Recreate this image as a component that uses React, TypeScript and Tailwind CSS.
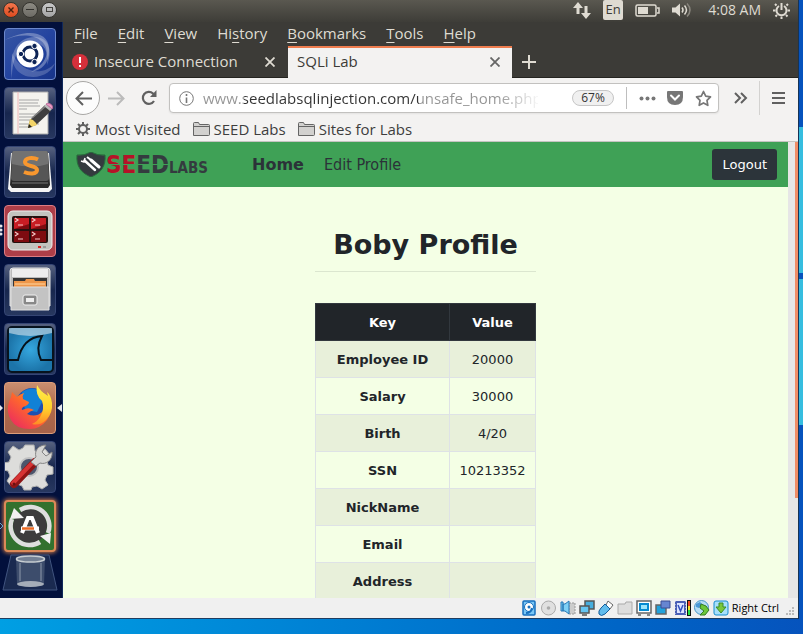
import React from "react";
import type { ReactNode } from "react";

const UI_FONT = "font-['Open_Sans',sans-serif]";
const PAGE_FONT = "font-['DejaVu_Sans',sans-serif]";

const menus = ["File", "Edit", "View", "History", "Bookmarks", "Tools", "Help"];
const accessIndex: Record<string, number> = { History: 2 };

const rows = [
  ["Employee ID", "20000"],
  ["Salary", "30000"],
  ["Birth", "4/20"],
  ["SSN", "10213352"],
  ["NickName", ""],
  ["Email", ""],
  ["Address", ""],
];

function TitleBar() {
  return (
    <header className="flex h-[22px] shrink-0 items-center bg-linear-to-b from-[#5a5850] to-[#3e3d38] pl-[3px] pr-2 text-[#dfdbd2]">
      <div className="-mt-[3px] flex gap-[3px]">
        <button aria-label="Close window" className="flex size-4 items-center justify-center rounded-full border border-[#35342f] bg-linear-to-b from-[#f4764c] to-[#dd4a1d]">
          <svg width="6" height="6" viewBox="0 0 6 6" stroke="#49210f" strokeWidth="1.4"><path d="M.5.5l5 5M5.500.500l-5 5" /></svg>
        </button>
        <button aria-label="Minimize window" className="flex size-4 items-center justify-center rounded-full border border-[#35342f] bg-linear-to-b from-[#8d8b83] to-[#6d6b65]">
          <span className="h-px w-2 bg-[#33322e]" />
        </button>
        <button aria-label="Restore window" className="flex size-4 items-center justify-center rounded-full border border-[#35342f] bg-linear-to-b from-[#c9c9c9] to-[#a3a3a3]">
          <span className="h-[5px] w-[7px] border border-[#44433f]" />
        </button>
      </div>
      <div className="-mt-[2px] ml-auto flex items-center">
        <svg width="18" height="18" viewBox="0 0 18 18" fill="#dfdbd2"><path d="M0 7l5-6 5 6H6.500v6h-3V7zM8 12l5 6 5-6h-3.500V5h-3v7z" /></svg>
        <span className="ml-3 flex h-5 w-5 items-center justify-center rounded-[2px] bg-[#dfdbd2] text-[13px] text-[#3c3b37]">En</span>
        <svg className="ml-3" width="25" height="13" viewBox="0 0 25 13" fill="none" stroke="#dfdbd2" strokeWidth="1.5"><rect x="1" y="1" width="20" height="11" rx="1.500" /><path d="M3 3h10v7H3z" fill="#dfdbd2" stroke="none" /><path d="M22 4h2v5h-2" /></svg>
        <svg className="ml-3" width="20" height="16" viewBox="0 0 20 16" fill="none" stroke="#dfdbd2" strokeWidth="1.500"><path d="M0 5.500h3.500L8 1.500v13l-4.500-4H0z" fill="#dfdbd2" stroke="none" /><path d="M10 5.500q2 2.500 0 5M12.500 3.500q4 4.500 0 9" /><path d="M15 1.500q6 6.500 0 13" stroke="#88857d" /></svg>
        <span className="ml-4 text-[14px] leading-5">4:08 AM</span>
        <svg className="ml-3" width="17" height="17" viewBox="0 0 17 17" fill="none" stroke="#dfdbd2" strokeWidth="2"><path d="M6 4a5 5 0 1 0 5 0M8.500 1v7" /><path d="M3.500 3.500L2 2M13.500 3.500L15 2M2.500 8.500H0M14.500 8.500H17M4 13l-1.500 1.500M13 13l1.500 1.500M8.500 14.500V17" /></svg>
      </div>
    </header>
  );
}

function Tile({ label, tone, children }: { label: string; tone: string; children: ReactNode }) {
  return (
    <button aria-label={label} className={`size-[52px] shrink-0 overflow-hidden rounded-[4px] border ${tone}`}>
      <svg className="block" width="50" height="50" viewBox="1 1 50 50">{children}</svg>
    </button>
  );
}

const DARK_TILE = "border-[#354574] bg-linear-to-b from-[#56617f] via-[#17264e] to-[#27375f]";

function Launcher() {
  return (
    <nav aria-label="Launcher" className="relative flex w-[63px] shrink-0 flex-col items-start gap-[7px] overflow-hidden border-r border-[#10295b] bg-[#02103c] pl-1 pt-[6px]">
      <Tile label="Search" tone="border-[#6c88cc] bg-linear-to-br from-[#3856a3] via-[#2444a0] to-[#17348a]">
        <g fill="#fff">
          <path d="M8 51C4 24 14 9 31 9c14 0 18 14 12 28 2-14-3-22-14-22C16 15 8 28 8 51z" fillOpacity=".25" />
          <path d="M1 12C24 0 44 4 45 20c1 15-7 22-18 24C60 26 36-4 1 12z" fillOpacity=".3" />
          <path d="M8 25c-1 13 7 24 21 24 11 0 20-7 22-14-12 14-34 10-43-10z" fillOpacity=".2" />
        </g>
        <circle cx="26" cy="26" r="13.500" fill="#fff" />
        <circle cx="26" cy="26" r="7" fill="none" stroke="#0d2355" strokeWidth="3" />
        <g fill="#0d2355" stroke="#fff" strokeWidth="1"><circle cx="17" cy="26" r="2.700" /><circle cx="30.500" cy="18" r="2.700" /><circle cx="30.500" cy="34" r="2.700" /></g>
      </Tile>
      <Tile label="Text editor" tone={DARK_TILE}>
        <path d="M9 5h35v42H9z" fill="#f4f3ee" stroke="#aaa" />
        <path d="M14 5v42" stroke="#f0b8b8" />
        <path d="M15 13h20M15 16h19M15 19h21M15 22h8M15 27h18M15 30h19M15 33h12M15 37h20M15 40h10" stroke="#a5a5a5" />
        <path d="M24 41l2-8L41 18l6 6-15 14z" fill="#3f3f3f" />
        <path d="M28 31L43 18" stroke="#858585" strokeWidth="1.500" />
        <path d="M24 41l2-9 3 1 3 3 1 2z" fill="#f3d568" /><path d="M24 41l1-4 3 3z" fill="#222" />
        <path d="M40 19l2-2 6 5-2 2z" fill="#bbb" /><path d="M42 17c4-2 8 2 6 5z" fill="#eb9bc4" stroke="#bf6f9d" />
      </Tile>
      <Tile label="Sublime Text" tone={DARK_TILE}>
        <path d="M7 7h38l3 36-3 3H7l-3-3z" fill="#f4f4f4" />
        <path d="M8 6h36l2 33-2 3H8l-2-3z" fill="#292929" /><path d="M10 5h32q2 0 2 3l1 24q0 3-3 3H10q-3 0-3-3L8 8q0-3 2-3z" fill="#565656" />
        <path d="M8 8q0-3 2-3h32q2 0 2 3v10Q28 23 8 18z" fill="#8a8a8a" opacity=".55" /><path d="M8 37h36" stroke="#777" />
        <path d="M34 13.500c-5-2.500-13-2-13 2.500 0 5 12 3 12 8 0 4.500-8 4-13 2" fill="none" stroke="#f8972e" strokeWidth="4" />
      </Tile>
      <Tile label="Terminator" tone="border-[#dc7c83] bg-[#ad3e48]">
        <rect x="4" y="6" width="44" height="39" rx="5" fill="#c3c3bf" stroke="#eee" /><rect x="8" y="11" width="36" height="27" rx="2" fill="#25100f" />
        <path d="M10 13h15v11H10zM27 13h15v11H27zM10 26h15v11H10zM27 26h15v11H27z" fill="#7d0b10" />
        <path d="M10 13h15v6L10 24zM27 13h15v6l-15 5z" fill="#c81d24" />
        <path d="M11 13l3 2-3 2m3 3h5M28 13l3 2-3 2m3 3h5M11 27l3 2-3 2m3 3h5M28 27l3 2-3 2m3 3h5" fill="none" stroke="#f3c7c7" strokeWidth="1.200" />
        <path d="M34 42h3" stroke="#d22" strokeWidth="2" /><path d="M39 42h3" stroke="#999" strokeWidth="2" />
      </Tile>
      <Tile label="Files" tone={DARK_TILE}>
        <path d="M6 7q0-3 3-3h34q3 0 3 3v35H6z" fill="#bcbcbc" stroke="#e8e8e8" /><path d="M8 5h36v8H8z" fill="#eee" /><path d="M9 14h34v9H9z" fill="#363636" />
        <path d="M10 17h11l1-2h8l1 2h11v8H10z" fill="#ed9649" /><path d="M11 20h30" stroke="#ffd7a3" />
        <path d="M7 23h38v23H7z" fill="#c3c3c3" stroke="#dfdfdf" /><rect x="19" y="31" width="14" height="10" rx="2" fill="#888" stroke="#eee" /><rect x="22" y="34" width="8" height="4" fill="#eee" />
      </Tile>
      <Tile label="Wireshark" tone={DARK_TILE}>
        <defs><radialGradient id="ws"><stop stopColor="#35a7df" /><stop offset="1" stopColor="#1c74a9" /></radialGradient></defs>
        <rect x="4" y="4" width="45" height="45" rx="4" fill="url(#ws)" stroke="#07131e" strokeWidth="2" /><path d="M5 5h43v5Q26 16 5 10z" fill="#d5e5ee" opacity=".6" />
        <path d="M4 37h10c3-14 11-23 24-24-5 9-4 18-1 24h11" fill="none" stroke="#06121b" strokeWidth="2" />
      </Tile>
      <Tile label="Firefox" tone="border-[#dc9c79] bg-linear-to-b from-[#c98e70] via-[#b0694a] to-[#a5624a]">
        <defs>
          <linearGradient id="fx" x1="1" y1="0" x2="0" y2="1"><stop stopColor="#ffb52a" /><stop offset=".45" stopColor="#ff6a2a" /><stop offset="1" stopColor="#e81f6a" /></linearGradient>
          <linearGradient id="fl" x1="0" y1="0" x2="0" y2="1"><stop stopColor="#fff04a" /><stop offset=".6" stopColor="#ffd02c" /><stop offset="1" stopColor="#ff8a26" /></linearGradient>
        </defs>
        <circle cx="28" cy="22" r="16" fill="#1e4fb0" /><path d="M18 10q8-6 16-2l4 12-5 10-12-2z" fill="#1181d6" />
        <path d="M7 15l1-5 5 5q3-3 7-4-2 3-1 6l6 3q0 3-6 5-2 2-1 3l3-1q4-2 9 1-4 1-7 4 9 4 15-2l9-8q1 8-4 16-7 9-17 9Q12 47 7 38 3 31 4 24q1-5 3-9z" fill="url(#fx)" />
        <path d="M33 3q-2 10 5 16 3 8-2 16-3 5-8 7 8 2 14-4 7-7 6-17-1-8-5-11l1 4Q36 9 33 3z" fill="url(#fl)" />
      </Tile>
      <Tile label="System settings" tone={DARK_TILE}>
        <path d="M21 4h9l1 6 5 2 5-4 5 6-3 5 1 5 5 2v7l-6 1-2 5 3 5-6 4-5-3-5 1-1 3h-7l-2-4-5-2-5 3-5-6 3-5-2-5-5-1v-7l6-1 2-5-3-5 5-6 6 4 4-2z" fill="#dddddb" stroke="#b1b1af" />
        <circle cx="25" cy="26" r="9" fill="#4d566c" stroke="#c1c1c1" strokeWidth="2" />
        <path d="M10 43L31 21" stroke="#8e1515" strokeWidth="8" strokeLinecap="round" /><path d="M9 42L31 19" stroke="#d63434" strokeWidth="4" strokeLinecap="round" />
        <path d="M32 16c-2-7 3-12 10-12l-4 7 4 4 6-4c1 8-6 13-12 11l-4 3-5-4z" fill="#d5d5d3" stroke="#858585" /><circle cx="10" cy="43" r="1.500" fill="#681010" />
      </Tile>
      <button aria-label="Software updater" className="size-[52px] shrink-0 overflow-hidden rounded-[4px] border-2 border-[#db8958] bg-[#32712e] shadow-[0_0_4px_1px_#c87848]">
        <svg width="48" height="48" viewBox="2 2 48 48">
          <circle cx="26" cy="26" r="17" fill="#3c3c3c" />
          <path d="M16 10A19 19 0 0 1 44 33M36 42A19 19 0 0 1 8 19" fill="none" stroke="#dedede" strokeWidth="4.500" />
          <path d="M6 19l4-11 10 10zM47 33l-1 11-10-8z" fill="#f1f1f1" />
          <path d="M18 33l6-15h4l6 15" fill="none" stroke="#fff" strokeWidth="4" /><path d="M17 28.500h18" stroke="#fff" strokeWidth="4" /><path d="M18 28.500h12" stroke="#eb6b25" strokeWidth="2.500" />
        </svg>
      </button>
      <button aria-label="Trash" className="-ml-[2px] -mt-[5px] shrink-0">
        <svg width="56" height="38" viewBox="0 0 56 38"><path d="M9 1h38l8 35H1z" fill="#1a2a50" stroke="#40547f" /><path d="M14 5l1 25q13 6 27 0l1-25" fill="#607087" opacity=".5" /><ellipse cx="28.500" cy="5" rx="14" ry="3" fill="#748195" stroke="#c8ced2" strokeWidth="1.500" /><ellipse cx="28.500" cy="30" rx="13.500" ry="3" fill="#a5adb8" /><path d="M18 9v18M39 9v18" stroke="#8e99aa" /></svg>
      </button>
      <svg aria-hidden="true" className="absolute left-0 top-[202px]" width="63" height="310" viewBox="0 0 63 310" fill="#e4e6eb"><circle cx="1" cy="2" r="1.500" /><circle cx="1" cy="6" r="1.500" /><circle cx="1" cy="10" r="1.500" /><path d="M0 181l3 3-3 3zM62 180l-5 4 5 4z" /><path d="M0 299l3 3-3 3" fill="none" stroke="#65a5d2" /></svg>
    </nav>
  );
}

function MenuAndTabs() {
  return (
    <div className="shrink-0 bg-[#3c3b37] text-[15px] text-[#dfdbd2]">
      <div role="menubar" className="flex h-6 items-start gap-5 pl-[11px]">
        {menus.map((m) => {
          const i = accessIndex[m] ?? 0;
          return (
            <button role="menuitem" key={m} className="leading-[22px]">
              {m.slice(0, i)}<span className="underline underline-offset-[3px]">{m[i]}</span>{m.slice(i + 1)}
            </button>
          );
        })}
      </div>
      <div role="tablist" className="flex h-8 border-b border-[#252420]">
        <div className="flex w-[225px] items-center pl-[9px] pr-[13px]">
          <button role="tab" aria-selected="false" className="flex items-center gap-[6px]">
            <svg width="16" height="16" viewBox="0 0 16 16"><circle cx="8" cy="8" r="8" fill="#d6303b" /><path d="M8 3v6M8 11v2" stroke="#fff" strokeWidth="2" /></svg>
            Insecure Connection
          </button>
          <button aria-label="Close Insecure Connection" className="ml-auto"><CloseMark /></button>
        </div>
        <div className="-mb-px flex w-[224px] items-center border-t-2 border-[#ef7d4f] bg-[#f3f2f1] pb-[3px] pl-[9px] pr-3 text-[#3c3b37]">
          <button role="tab" aria-selected="true">SQLi Lab</button>
          <button aria-label="Close SQLi Lab" className="ml-auto text-[#666]"><CloseMark /></button>
        </div>
        <button aria-label="New tab" className="ml-[10px]"><svg width="14" height="14" viewBox="0 0 14 14" stroke="currentColor" strokeWidth="2"><path d="M7 0v14M0 7h14" /></svg></button>
      </div>
    </div>
  );
}

function CloseMark() {
  return <svg className="block" width="10" height="10" viewBox="0 0 10 10" stroke="currentColor" strokeWidth="1.800"><path d="M.5.5l9 9M9.500.500l-9 9" /></svg>;
}

function Folder() {
  return <svg width="17" height="14" viewBox="0 0 17 14" fill="#d2d1cf" stroke="#656565"><path d="M.5 13.500v-12q0-1 1-1h4l1 2h9q1 0 1 1v9q0 1-1 1zM.5 4.500h16" /></svg>;
}

function NavigationBar() {
  return (
    <div className="shrink-0 border-b border-[#c5c4c1] bg-[#f3f2f1] text-[#606060]">
      <div className="flex h-10 items-center pl-[3px] pr-[13px]">
        <button aria-label="Back" className="flex size-[34px] shrink-0 items-center justify-center rounded-full border border-[#a8a7a5] bg-[#fcfcfc]">
          <svg width="17" height="15" viewBox="0 0 17 15" fill="none" stroke="currentColor" strokeWidth="2"><path d="M8 1L1.500 7.500 8 14M1.500 7.500H17" /></svg>
        </button>
        <button aria-label="Forward" disabled className="ml-2 text-[#bbb]"><svg width="17" height="15" viewBox="0 0 17 15" fill="none" stroke="currentColor" strokeWidth="2"><path d="M9 1l6.500 6.500L9 14M15.500 7.500H0" /></svg></button>
        <button aria-label="Reload" className="ml-4"><svg width="16" height="16" viewBox="0 0 16 16" fill="none" stroke="currentColor" strokeWidth="2.200"><path d="M13 11A6 6 0 1 1 12 3.500L14 5.500" /><path d="M15.500 0v7H9z" fill="currentColor" stroke="none" /></svg></button>
        <div className="ml-3 flex h-[30px] min-w-0 flex-1 items-center rounded-[4px] border border-[#c2c1bf] bg-white px-[6px] pl-[9px] shadow-[0_1px_2px_#0001]">
          <svg className="shrink-0" width="15" height="15" viewBox="0 0 15 15" fill="none" stroke="#777"><circle cx="7.500" cy="7.500" r="6.800" /><path d="M7.500 6.500V12M7.500 3v2" strokeWidth="1.600" /></svg>
          <input aria-label="Address" readOnly defaultValue="www.seedlabsqlinjection.com/unsafe_home.php" className="ml-[9px] min-w-0 flex-1 bg-[linear-gradient(90deg,#949494_41px,#333_41px,#333_216px,#949494_216px,#949494_295px,transparent_338px)] bg-clip-text text-[15px] text-transparent outline-none" />
          <button className="ml-[34px] flex h-4 w-[42px] shrink-0 items-center justify-center rounded-full border border-[#c6c6c6] bg-[#f0f0f0] text-[12px] text-[#333]">67%</button>
          <span className="ml-3 h-[22px] w-px shrink-0 bg-[#bebebe]" />
          <button aria-label="Page actions" className="ml-3 shrink-0"><svg width="17" height="5" viewBox="0 0 17 5" fill="#777"><circle cx="2.500" cy="2.500" r="2" /><circle cx="8.500" cy="2.500" r="2" /><circle cx="14.500" cy="2.500" r="2" /></svg></button>
          <button aria-label="Save to Pocket" className="ml-[11px] shrink-0"><svg width="16" height="14" viewBox="0 0 16 14" fill="#777"><path d="M1 0h14q1 0 1 1v5q0 8-8 8T0 6V1q0-1 1-1z" /><path d="M4 4.500l4 4 4-4" fill="none" stroke="#fff" strokeWidth="2" strokeLinecap="round" /></svg></button>
          <button aria-label="Bookmark this page" className="ml-3 shrink-0"><svg width="17" height="17" viewBox="0 0 17 17" fill="none" stroke="#777" strokeWidth="1.700"><path d="M8.500 1.500l2.200 4.700 4.800.6-3.500 3.500.8 5-4.300-2.400-4.300 2.400.8-5-3.500-3.500 4.800-.6z" strokeLinejoin="round" /></svg></button>
        </div>
        <button aria-label="More tools" className="ml-[15px]"><svg width="14" height="12" viewBox="0 0 14 12" fill="none" stroke="currentColor" strokeWidth="2"><path d="M1 1l5 5-5 5M7 1l5 5-5 5" /></svg></button>
        <span className="ml-[11px] h-[34px] w-px bg-[#d3d2d0]" />
        <button aria-label="Open menu" className="ml-3"><svg width="13" height="12" viewBox="0 0 13 12" stroke="currentColor" strokeWidth="2"><path d="M0 1h13M0 6h13M0 11h13" /></svg></button>
      </div>
      <div className="flex h-[23px] items-center gap-3 pb-[2px] pl-[13px] text-[15px] leading-5 text-[#3e3e3e]">
        <button className="flex items-center gap-[5px]"><svg width="14" height="14" viewBox="0 0 14 14" fill="none" stroke="#606060"><circle cx="7" cy="7" r="4" strokeWidth="2" /><path d="M7 0v3M7 11v3M0 7h3M11 7h3M2 2l2 2M10 10l2 2M2 12l2-2M10 4l2-2" strokeWidth="2" /></svg>Most Visited</button>
        <button className="flex items-center gap-1"><Folder />SEED Labs</button>
        <button className="flex items-center gap-1"><Folder />Sites for Labs</button>
      </div>
    </div>
  );
}

function WebPage() {
  return (
    <div className="flex min-h-0 flex-1">
      <main className={`min-w-0 flex-1 overflow-hidden bg-[#f4ffe5] text-[#212529] ${PAGE_FONT}`}>
        <nav className="flex h-[45px] items-center bg-[#3fa156] pl-[13px] pr-[11px] text-[#2b3238]">
          <a href="#home" aria-label="Seed Labs" className="flex items-center font-['DejaVu_Sans_Condensed','DejaVu_Sans',sans-serif] font-bold">
            <svg width="30" height="25" viewBox="0 0 30 25"><path d="M15 0q7 4 14 3c1 11-4 18-14 22C5 21 0 14 1 3q7 1 14-3z" fill="#343b3f" stroke="#276e3c" /><path d="M8.500 8.500L19 18" stroke="#fff" strokeWidth="2.500" strokeLinecap="round" /><path d="M5 9l3 1 1-4" fill="none" stroke="#fff" strokeWidth="1.500" /><path d="M11 5l4 3" stroke="#fff" strokeWidth="2" /><path d="M15 8l8 7" stroke="#fff" strokeWidth="3" strokeLinecap="round" /></svg>
            <span className="relative flex h-6 items-end text-[24px] leading-6"><span className="text-[#b51228]">SE</span><span className="text-[#343b3f]">ED</span><span aria-hidden="true" className="absolute inset-x-0 top-[11px] h-px bg-[#3fa156]" /></span>
            <span className="self-end text-[15px] leading-[17px] text-[#343b3f]">LABS</span>
          </a>
          <a href="#home" className="ml-11 text-[16px] font-bold">Home</a>
          <a href="#edit" className="ml-5 font-['DejaVu_Sans_Condensed','DejaVu_Sans',sans-serif] text-[16px]">Edit Profile</a>
          <button className="ml-auto h-[31px] rounded-[3px] bg-[#2c343a] px-[10px] text-[13px] text-white">Logout</button>
        </nav>
        <section className="mx-auto w-[221px] pt-[37px]">
          <h1 className="border-b border-[#dbe6cf] pb-[6px] text-center text-[27px] font-bold leading-[41px]">Boby Profile</h1>
          <table className="mt-[31px] w-full table-fixed border-collapse text-center text-[13px] leading-5">
            <colgroup><col className="w-[134px]" /><col /></colgroup>
            <thead className="bg-[#212529] text-white">
              <tr>
                <th scope="col" className="h-[37px] border border-[#32383e] pt-[2px]">Key</th>
                <th scope="col" className="border border-[#32383e] pt-[2px]">Value</th>
              </tr>
            </thead>
            <tbody>
              {rows.map(([key, value]) => (
                <tr key={key} className="odd:bg-[#e8f0da]">
                  <th scope="row" className="h-[37px] border border-[#dee2e6] pt-[2px]">{key}</th>
                  <td className="border border-[#dee2e6] pt-[2px]">{value}</td>
                </tr>
              ))}
            </tbody>
          </table>
        </section>
      </main>
      <div className="w-[10px] shrink-0 bg-[#e6e6e6]"><div className="ml-auto h-[78%] w-[3px] bg-[#f08d66]" /></div>
    </div>
  );
}

function StatusIcon({ w = 16, children }: { w?: number; children: ReactNode }) {
  return <svg width={w} height="16" viewBox={`0 0 ${w} 16`} className="shrink-0">{children}</svg>;
}

function StatusBar() {
  return (
    <footer className="flex h-[21px] shrink-0 items-center justify-end gap-[3px] border-b border-[#203d60] bg-[#f0f0f0] pr-[2px]">
      <StatusIcon><rect x="2" y="1" width="12" height="14" rx="1" fill="#79c6f5" stroke="#176fbd" strokeWidth="1.500" /><circle cx="8" cy="7" r="4.500" fill="#fff" stroke="#176fbd" /><circle cx="8" cy="7" r="1.500" fill="#176fbd" /><path d="M5 13q5 0 6-5" stroke="#176fbd" fill="none" strokeWidth="2" /></StatusIcon>
      <StatusIcon w={17}><circle cx="8.500" cy="8" r="7" fill="#e0e0e0" stroke="#aaa" /><circle cx="8.500" cy="8" r="1.800" fill="#aaa" /></StatusIcon>
      <StatusIcon><path d="M9 3h6v11H9z" fill="#ccc" stroke="#999" strokeDasharray="2 1" /><path d="M1 2h2v9H1zM3 4h2l4-3v13l-4-3H3z" fill="#7fd0f5" stroke="#2477b5" /></StatusIcon>
      <StatusIcon><path d="M6 1h9v8H6z" fill="#47adde" stroke="#555" strokeWidth="1.500" /><path d="M1 6h9v7H1zM3 15h5" fill="#65c5f2" stroke="#555" strokeWidth="1.500" /></StatusIcon>
      <StatusIcon><path d="M10 1l5 4-3 4-4-4z" fill="#fff" stroke="#666" /><path d="M7 4l5 5-5 5q-4 3-6 0-1-3 2-6z" fill="#61bced" stroke="#155d9b" /></StatusIcon>
      <StatusIcon><path d="M1 4h7l1-2h6v12H1z" fill="#ddd" stroke="#aaa" /></StatusIcon>
      <StatusIcon><path d="M1 1h14v12H1zM2 15h3M11 15h3" fill="#fff" stroke="#666" strokeWidth="1.500" /><rect x="4" y="4" width="8" height="6" fill="#9de5fb" stroke="#078bd1" strokeWidth="2" /></StatusIcon>
      <StatusIcon><path d="M1 5h10v9H1z" fill="#22a1db" stroke="#666" strokeWidth="1.500" /><path d="M6 1h9v7H6z" fill="#6685d1" stroke="#3a4c94" /></StatusIcon>
      <StatusIcon w={17}><rect x="1" y="1" width="11" height="14" fill="#4a5fb5" /><path d="M1 1v14M12 1v14" stroke="#f0f0f0" strokeDasharray="1 2" /><rect x="3" y="3" width="7" height="10" fill="#dde4ff" /><path d="M4 5l2.500 6L9 5" fill="none" stroke="#3450bd" strokeWidth="1.500" /><rect x="13" y="0" width="4" height="16" fill="#111" /><path d="M14 1h2v5h-2z" fill="#f24824" /><path d="M14 6h2v4h-2z" fill="#f4e52b" /><path d="M14 10h2v5h-2z" fill="#25df44" /></StatusIcon>
      <StatusIcon><circle cx="7.500" cy="7.500" r="7" fill="#b5dcf5" stroke="#4594c7" /><path d="M2 4l4-2 2 2-3 4-3-1z" fill="#4b97d6" /><path d="M7 4l5 2 3 4-4 5H6l4-4-4-3z" fill="#6cc63a" stroke="#327b25" /></StatusIcon>
      <StatusIcon><rect x="1" y="1" width="14" height="14" rx="2" fill="#a8e0fb" stroke="#168cce" /><path d="M6 3h4v4h3l-5 6-5-6h3z" fill="#7ac73b" stroke="#3b8d29" /></StatusIcon>
      <span className="text-[11px] text-black">Right Ctrl</span>
      <svg className="ml-[2px] self-end" width="12" height="12" viewBox="0 0 12 12" fill="#bbb"><path d="M8 1h2v2H8zM8 4h2v2H8zM8 7h2v2H8zM5 4h2v2H5zM5 7h2v2H5zM2 7h2v2H2z" /></svg>
    </footer>
  );
}

export default function App() {
  return (
    <div className={`flex h-screen overflow-hidden bg-linear-to-r from-[#009fe3] to-[#0653bd] pb-[15px] ${UI_FONT}`}>
      <div className="flex min-w-0 flex-1 flex-col">
        <TitleBar />
        <div className="flex min-h-0 flex-1">
          <Launcher />
          <div className="flex min-w-0 flex-1 flex-col">
            <MenuAndTabs />
            <NavigationBar />
            <WebPage />
          </div>
        </div>
        <StatusBar />
      </div>
      <div className="flex w-[5px] shrink-0 flex-col gap-[6px] border-l border-[#173354] bg-[#0653bd] pt-[127px]">
        <div className="h-[146px] border-2 border-[#35bddf] bg-[#168ec9]" />
        <div className="h-[146px] border-2 border-[#35bddf] bg-[#168ec9]" />
      </div>
    </div>
  );
}
